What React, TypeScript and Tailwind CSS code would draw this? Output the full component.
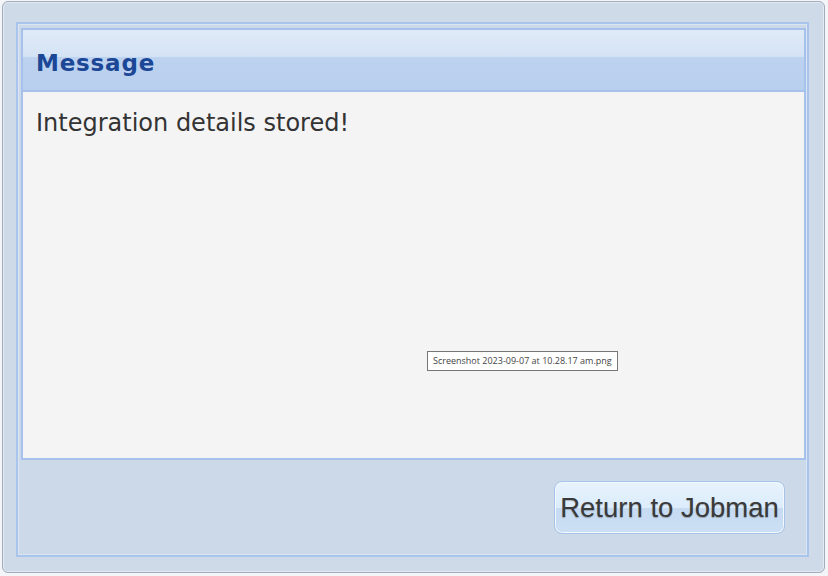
import React from "react";

export default function App() {
  return (
    <div className="w-[828px] h-[576px] bg-[#f3f5f8] pt-[1px] pl-[2px] pr-[3px] pb-[3px]" style={{ fontFamily: '"DejaVu Sans", Verdana, sans-serif' }}>
      <div className="h-full rounded-[6px] border border-[#a2acbb] bg-[#cfdae8] pt-[20px] pl-[13px] pr-[15px] pb-[15px] shadow-[inset_0_0_0_1px_#e3eaf3]">
        <div className="h-full border-2 border-[#a9c5ee] bg-[#ccd9e8] flex flex-col pt-[4px] pl-[3px] pr-[1px] shadow-[inset_0_0_0_1px_#dbe5f2]">
          <div className="flex-1 border-2 border-[#a6c2ec] bg-[#f4f4f4] flex flex-col">
            <div className="h-[62px] border-b-2 border-[#a6c2ec] bg-[linear-gradient(to_bottom,#e0eaf7_0%,#d4e3f5_44%,#bcd2ef_46%,#b8cfee_100%)] flex items-center pl-[13px] pt-[6px]">
              <span className="text-[23px] font-bold text-[#1b4796] leading-none tracking-[0.8px]">Message</span>
            </div>
            <div className="flex-1 relative pl-[13px] pt-[19px]">
              <div className="text-[24px] text-[#333333] leading-none">Integration details stored!</div>
              <div
                className="absolute left-[404px] top-[259px] h-[20px] px-[5px] border border-[#767676] bg-white flex items-center text-[9px] text-[#444]"
                style={{ fontFamily: '"Open Sans", "Noto Sans", sans-serif' }}
              >
                Screenshot 2023-09-07 at 10.28.17 am.png
              </div>
            </div>
          </div>
          <div className="h-[95px] flex justify-end items-end pr-[21px] pb-[21px]">
            <button
              className="w-[231px] h-[53px] rounded-[8px] border border-[#a7c3e8] bg-[linear-gradient(to_bottom,#e7f3fd_0%,#dcecfb_50%,#c6dbf2_52%,#cbdff4_100%)] shadow-[inset_0_0_0_1px_#f2f8fe] text-[27.5px] text-[#3a3a3a] flex items-center justify-center"
              style={{ fontFamily: '"Liberation Sans", Arial, sans-serif', textShadow: "0 1px 1px rgba(0,0,0,0.25)" }}
            >
              Return to Jobman
            </button>
          </div>
        </div>
      </div>
    </div>
  );
}
